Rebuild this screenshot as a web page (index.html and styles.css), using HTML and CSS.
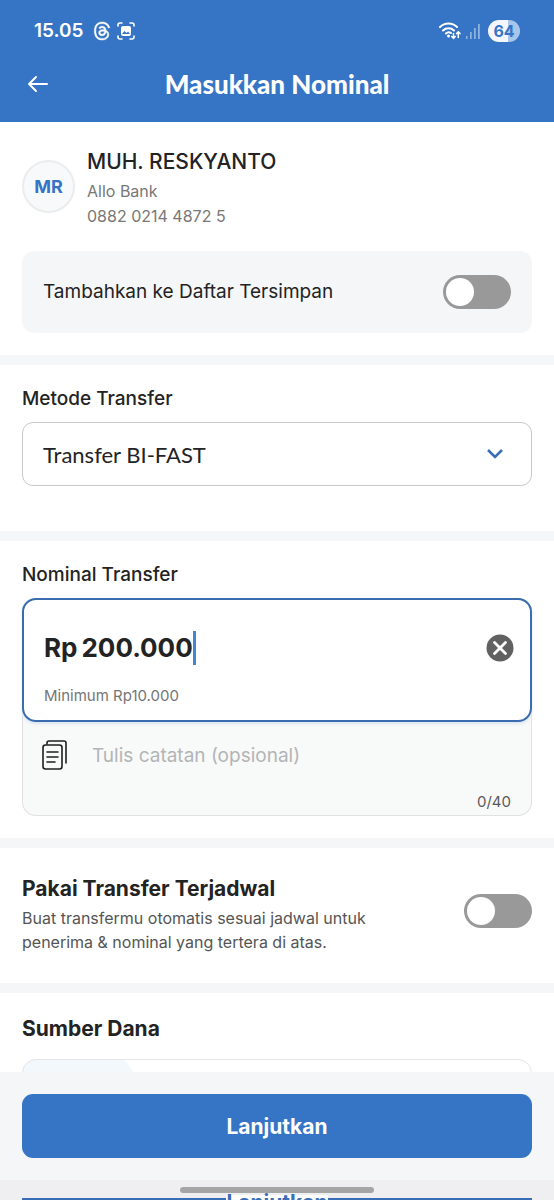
FILE: index.html
```html
<!DOCTYPE html>
<html lang="id">
<head>
<meta charset="utf-8">
<meta name="viewport" content="width=device-width, initial-scale=1">
<title>Masukkan Nominal</title>
<link rel="stylesheet" href="styles.css">
</head>
<body>
<header class="top">
  <div class="status">
    <div class="status-left">
      <span class="clock">15.05</span>
      <svg class="threads" viewBox="0 0 192 192" width="18" height="20" fill="#fff" aria-hidden="true"><path stroke="#fff" stroke-width="5" d="M141.5 89c-.8-.4-1.700-.8-2.500-1.100-1.500-27.300-16.400-42.900-41.500-43.100h-.3c-15 0-27.500 6.400-35.100 18l13.800 9.500c5.700-8.700 14.700-10.600 21.300-10.600h.2c8.200.1 14.500 2.500 18.500 7.100 2.900 3.400 4.900 8.100 5.900 14.100-7.300-1.200-15.200-1.600-23.700-1.100-23.800 1.400-39.100 15.300-38.100 34.600.5 9.800 5.400 18.200 13.800 23.700 7.100 4.700 16.200 7 25.700 6.500 12.500-.7 22.400-5.500 29.200-14.200 5.200-6.700 8.500-15.300 10-26.100 6 3.600 10.400 8.400 12.900 14.100 4.200 9.700 4.400 25.500-8.500 38.500-11.300 11.300-24.900 16.200-45.500 16.300-22.800-.2-40.100-7.500-51.300-21.700C35.800 140.100 30.300 120.800 30.100 96c.2-24.800 5.700-44.100 16.200-57.500C57.500 24.300 74.800 17 97.600 16.800c23 .2 40.500 7.500 52.200 21.800 5.700 7 10 15.900 12.900 26.200l16.100-4.300c-3.500-12.800-9-23.800-16.400-33C147.300 9.100 125.200.2 97.600 0h-.1C70 .2 48.200 9.100 33.900 27.300 21.100 43.500 14.500 66 14.300 96c.2 30 6.800 52.500 19.600 68.700C48.200 182.900 70 191.800 97.500 192h.1c24.500-.2 41.800-6.600 56-20.800 18.600-18.600 18.100-42 11.900-56.300-4.400-10.300-12.800-18.600-24-24ZM98.400 129.500c-10.400.6-21.300-4.100-21.800-14.100-.4-7.400 5.300-15.700 22.500-16.700 2-.1 3.900-.2 5.800-.2 6.200 0 12.100.6 17.400 1.800-2 24.700-13.600 28.700-23.900 29.200Z"/></svg>
      <svg width="20" height="20" viewBox="0 0 20 20" fill="none" stroke="#fff" stroke-width="1.600" stroke-linecap="round" aria-hidden="true"><path d="M2 5V4a2 2 0 0 1 2-2h2M14 2h2a2 2 0 0 1 2 2v1M18 15v1a2 2 0 0 1-2 2h-2M6 18H4a2 2 0 0 1-2-2v-1"/><rect x="5" y="5" width="10" height="10" rx="2" fill="#fff" stroke="none"/><path d="M6 13l2.500-3 2 2 1.500-1.500 2 2.500z" fill="#3675c5" stroke="none"/></svg>
    </div>
    <div class="status-right">
      <svg width="22" height="18" viewBox="0 0 22 18" fill="none" stroke="#fff" stroke-width="2" stroke-linecap="round" aria-hidden="true"><path d="M1 5a12 12 0 0 1 17 0M4 8.500a8 8 0 0 1 11 0M7 11.500a4 4 0 0 1 5-.5"/><circle cx="9.500" cy="14" r="1.500" fill="#fff" stroke="none"/><path stroke-width="1.500" d="M14.500 11.500V16M12.800 14.500l1.700 1.800 1.700-1.800M19.300 15.500V10M17.600 11.600l1.700-1.800 1.700 1.800"/></svg>
      <svg width="14" height="15" viewBox="0 0 14 15" fill="#8fb3e0" aria-hidden="true"><path d="M0 12h1.500v3H0zM4 8h1.700v7H4zM8 4h1.700v11H8zM12 0h1.800v15H12z"/></svg>
      <span class="battery">64</span>
    </div>
  </div>
  <div class="titlebar">
    <button class="back" type="button" aria-label="Kembali"><svg width="22" height="18" viewBox="0 0 22 18" fill="none" stroke="#fff" stroke-width="2" stroke-linecap="round" stroke-linejoin="round"><path d="M20 9H2M9 2L2 9l7 7"/></svg></button>
    <h1>Masukkan Nominal</h1>
  </div>
</header>

<main class="content">
  <section class="recipient">
    <div class="person">
      <div class="avatar">MR</div>
      <div>
        <h2 class="name">MUH. RESKYANTO</h2>
        <p class="detail">Allo Bank</p>
        <p class="detail">0882 0214 4872 5</p>
      </div>
    </div>
    <div class="save">
      <label for="save">Tambahkan ke Daftar Tersimpan</label>
      <input class="switch" type="checkbox" role="switch" id="save">
    </div>
  </section>

  <section class="method">
    <label class="label" for="method">Metode Transfer</label>
    <div class="select-wrap">
      <select id="method"><option>Transfer BI-FAST</option></select>
      <svg class="chevron" width="16" height="10" viewBox="0 0 16 10" fill="none" stroke="#3a6db8" stroke-width="2.600" aria-hidden="true"><path d="M1 1l7 7 7-7"/></svg>
    </div>
  </section>

  <section class="nominal">
    <label class="label" for="amount">Nominal Transfer</label>
    <div class="note-card">
      <div class="amount-card">
        <div class="amount-row">
          <div class="amount"><span>Rp</span><input id="amount" type="text" inputmode="numeric" value="200.000" size="7"><i class="caret"></i></div>
          <button class="clear" type="button" aria-label="Hapus nominal"><svg width="28" height="28" viewBox="0 0 28 28"><circle cx="14" cy="14" r="13.500" fill="#616161"/><path d="M8.500 8.500l11 11M19.500 8.500l-11 11" stroke="#fff" stroke-width="2.800" stroke-linecap="round"/></svg></button>
        </div>
        <p class="minimum">Minimum Rp10.000</p>
      </div>
      <div class="note-row">
        <svg width="26" height="30" viewBox="0 0 26 30" fill="none" stroke="#1f1f1f" stroke-width="1.600" stroke-linecap="round" stroke-linejoin="round" aria-hidden="true"><rect x="1" y="5" width="19" height="24" rx="2.500"/><path d="M5 4V3a2 2 0 0 1 2-2h15a2 2 0 0 1 2 2v20M5 12h11M5 17h11M5 22h8"/></svg>
        <input class="note" type="text" placeholder="Tulis catatan (opsional)" aria-label="Catatan">
      </div>
      <p class="counter">0/40</p>
    </div>
  </section>

  <section class="schedule">
    <div>
      <label class="heading" for="schedule">Pakai Transfer Terjadwal</label>
      <p class="explain">Buat transfermu otomatis sesuai jadwal untuk penerima &amp; nominal yang tertera di atas.</p>
    </div>
    <input class="switch" type="checkbox" role="switch" id="schedule">
  </section>

  <section class="source">
    <h2 class="heading">Sumber Dana</h2>
    <div class="account"></div>
  </section>
</main>

<footer class="bottom">
  <button class="primary" type="button">Lanjutkan</button>
</footer>
<div class="gesture">
  <div class="pill"></div>
  <div class="peek" aria-hidden="true"><span>Lanjutkan</span></div>
</div>
</body>
</html>
```

FILE: styles.css
```css
* { box-sizing: border-box; }
body {
  margin: 0;
  height: 100vh;
  display: flex;
  flex-direction: column;
  overflow: hidden;
  background: #fff;
  color: #232323;
  font-family: Inter, "Noto Sans", sans-serif;
}
h1, h2, p { margin: 0; }
button, input, select { font: inherit; color: inherit; margin: 0; }
button { border: 0; padding: 0; background: none; }
svg { display: block; flex: none; }

.top { flex: none; background: #3675c5; color: #fff; padding: 16px 22px 22px; }
.status { display: flex; justify-content: space-between; align-items: center; height: 30px; padding: 0 12px; }
.status-left { display: flex; align-items: center; gap: 5px; }
.clock { font-size: 19px; font-weight: 600; line-height: 30px; margin-right: 4px; }
.status-right { display: flex; align-items: center; gap: 5px; }
.battery {
  width: 32px;
  height: 22px;
  margin-left: 3px;
  border-radius: 11px;
  background: linear-gradient(90deg, #f3f7fd 64%, #a8c5ea 64%);
  color: #3675c5;
  font-size: 16px;
  font-weight: 700;
  line-height: 22px;
  text-align: center;
}
.titlebar { display: grid; grid-template-columns: 32px 1fr 32px; align-items: center; margin-top: 22px; height: 32px; }
.back { width: 32px; height: 32px; padding-left: 5px; }
h1 { font-family: Lato, sans-serif; font-size: 26px; font-weight: 900; line-height: 32px; text-align: center; }

.content { flex: 1; min-height: 0; overflow: hidden; }
section { padding: 0 22px; border-bottom: 10px solid #f5f6f8; }
.label { display: block; font-size: 19px; font-weight: 500; line-height: 24px; }
.heading { display: block; font-size: 21px; font-weight: 700; line-height: 28px; }

.recipient { padding-top: 26px; padding-bottom: 22px; }
.person { display: flex; align-items: flex-start; gap: 12px; }
.avatar {
  width: 53px;
  height: 53px;
  margin-top: 12px;
  border: 2px solid #ebeced;
  border-radius: 50%;
  background: #f8f9fa;
  color: #3675c5;
  font-size: 18px;
  font-weight: 700;
  line-height: 49px;
  text-align: center;
}
.name { margin-bottom: 3px; font-size: 21px; font-weight: 500; line-height: 28px; }
.detail { font-size: 16px; line-height: 25px; color: #777; }
.save {
  display: flex;
  align-items: center;
  justify-content: space-between;
  margin-top: 22px;
  padding: 24px 21px;
  border-radius: 12px;
  background: #f5f6f8;
  font-size: 19px;
  line-height: 34px;
}
.switch {
  appearance: none;
  flex: none;
  width: 68px;
  height: 34px;
  padding: 3px;
  border-radius: 17px;
  background: #999;
}
.switch::before { content: ""; display: block; width: 28px; height: 28px; border-radius: 50%; background: #fff; }
.switch:checked { background: #3675c5; }
.switch:checked::before { margin-left: auto; }

.method { padding-top: 22px; padding-bottom: 45px; }
.select-wrap { position: relative; margin-top: 11px; }
select {
  appearance: none;
  display: block;
  width: 100%;
  height: 64px;
  padding: 0 20px;
  border: 1px solid #c8c8c8;
  border-radius: 11px;
  background: #fff;
  font-family: Lato, sans-serif;
  font-size: 22px;
}
.chevron { position: absolute; right: 29px; top: 27px; pointer-events: none; }

.nominal { padding-top: 22px; padding-bottom: 22px; }
.note-card { margin-top: 11px; border-radius: 14px; background: #f8f9f9; box-shadow: inset 0 0 0 1px #dfe1e2; }
.amount-card {
  padding: 30px 16px 12px 20px;
  border: 2px solid #3a6db0;
  border-radius: 14px;
  background: #fff;
  box-shadow: 0 2px 3px #dce5f2;
}
.amount-row { display: flex; align-items: center; justify-content: space-between; }
.amount { display: flex; align-items: center; gap: 4px; font-size: 26px; font-weight: 700; line-height: 36px; }
.amount input { field-sizing: content; min-width: 0; padding: 0; border: 0; outline: 0; background: none; line-height: 36px; }
.caret { width: 3px; height: 34px; margin-left: -4px; background: #4285d0; }
.minimum { margin-top: 18px; font-size: 15px; line-height: 24px; color: #757575; }
.note-row { display: flex; align-items: center; gap: 24px; padding: 16px 20px 0; }
.note { flex: 1; min-width: 0; height: 34px; padding: 0; border: 0; outline: 0; background: none; font-size: 19px; }
.note::placeholder { color: #b3b5b5; opacity: 1; }
.counter { padding: 20px 21px 4px; font-size: 15px; line-height: 20px; color: #5a5a5a; text-align: right; }

.schedule { display: flex; align-items: flex-start; justify-content: space-between; padding-top: 27px; padding-bottom: 29px; }
.schedule > div { max-width: 380px; }
.schedule .switch { margin-top: 19px; }
.explain { margin-top: 3px; font-size: 16px; line-height: 24px; color: #555; }

.source { padding-top: 22px; border-bottom: 0; }
.account {
  height: 90px;
  margin-top: 16px;
  border: 1px solid #e2e5e9;
  border-radius: 14px;
  background: radial-gradient(circle at 40px 60px, #f3f8fd 85px, #fff 86px);
}

.bottom { flex: none; padding: 22px; background: #f5f6f8; }
.primary { display: block; width: 100%; height: 64px; border-radius: 11px; background: #3675c5; color: #fff; font-size: 21px; font-weight: 700; }
.gesture { flex: none; display: flex; flex-direction: column; align-items: center; background: #efeff1; padding: 7px 22px 0; }
.pill { width: 38%; height: 6px; border-radius: 3px; background: #a5a5a5; }
.peek {
  align-self: stretch;
  height: 7px;
  overflow: hidden;
  display: flex;
  justify-content: center;
  background: linear-gradient(#efeff1 5px, #3a6db8 5px);
  color: #3a6db8;
  font-size: 21px;
  font-weight: 700;
  line-height: 20px;
}
.peek span { background: linear-gradient(#efeff1 2px, #fff 2px); }
```
